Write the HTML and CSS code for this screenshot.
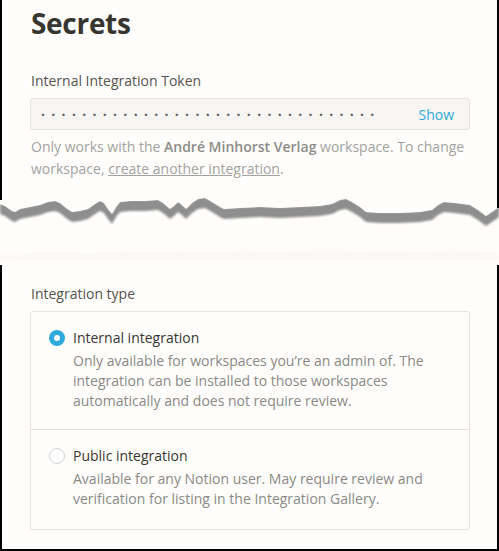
FILE: index.html
```html
<!doctype html>
<html lang="en">
  <head>
    <meta charset="UTF-8" />
    <meta name="viewport" content="width=device-width, initial-scale=1.0" />
    <title>Integration settings</title>
    <link rel="stylesheet" href="styles.css">
  </head>
  <body>
    <div class="sheet sheet-top">
      <h1 class="title">Secrets</h1>

      <div class="field-label">Internal Integration Token</div>
      <div class="token">
        <span class="token-dots">·································</span>
        <span class="token-show">Show</span>
      </div>
      <p class="help">
        Only works with the <strong>André Minhorst Verlag</strong> workspace. To change
        workspace, <a href="#">create another integration</a>.
      </p>
    </div>

    <!-- torn paper between the two cut-outs -->
    <svg class="tear" width="499" height="69" viewBox="0 0 499 69">
      <defs>
        <filter id="soft" x="-5%" y="-50%" width="110%" height="200%">
          <feGaussianBlur stdDeviation="1" />
        </filter>
        <filter id="faint" x="-5%" y="-50%" width="110%" height="200%">
          <feGaussianBlur stdDeviation="2" />
        </filter>
      </defs>
      <path filter="url(#faint)" fill="#f9f8f5" d="M0,60 L30,57 L60,56 L90,58 L120,55 L150,56 L180,55 L210,57 L240,54 L270,56 L300,55 L330,53 L360,56 L390,54 L420,56 L450,54 L499,56 L499,64 L0,64 Z" />
      <path filter="url(#soft)" fill="#8e8e8e" d="M0,7 L5,9 L12,14 L15,15 L20,12 L30,10 L40,8 L48,5 L55,4 L60,6 L66,11 L72,15 L80,14 L88,12 L95,7 L100,4 L104,6 L108,12 L112,17 L116,10 L120,5 L130,4 L145,4 L158,3 L163,6 L170,12 L174,9 L178,5 L182,8 L186,12 L192,6 L198,2 L205,1 L212,5 L220,10 L224,12 L240,11 L260,10 L280,11 L300,10 L320,9 L332,7 L340,3 L346,2 L352,5 L360,10 L366,15 L380,16 L400,16 L420,15 L432,13 L438,8 L444,5 L455,6 L470,8 L478,13 L486,19 L492,15 L499,10 L499,21 L492,26 L486,30 L478,24 L470,19 L455,17 L444,16 L438,19 L432,24 L420,26 L400,27 L380,27 L366,26 L360,21 L352,16 L346,13 L340,14 L332,18 L320,20 L300,21 L280,22 L260,21 L240,22 L224,23 L220,21 L212,16 L205,12 L198,13 L192,17 L186,23 L182,19 L178,16 L174,20 L170,23 L163,17 L158,14 L145,15 L130,15 L120,16 L116,21 L112,28 L108,23 L104,17 L100,15 L95,18 L88,23 L80,25 L72,26 L66,22 L60,17 L55,15 L48,16 L40,19 L30,21 L20,23 L15,26 L12,25 L5,20 L0,18 Z" />
      <path fill="#fffefc" d="M0,0 L499,0 L499,11 L492,16 L486,20 L478,14 L470,9 L455,7 L444,6 L438,9 L432,14 L420,16 L400,17 L380,17 L366,16 L360,11 L352,6 L346,3 L340,4 L332,8 L320,10 L300,11 L280,12 L260,11 L240,12 L224,13 L220,11 L212,6 L205,2 L198,3 L192,7 L186,13 L182,9 L178,6 L174,10 L170,13 L163,7 L158,4 L145,5 L130,5 L120,6 L116,11 L112,18 L108,13 L104,7 L100,5 L95,8 L88,13 L80,15 L72,16 L66,12 L60,7 L55,5 L48,6 L40,9 L30,11 L20,13 L15,16 L12,15 L5,10 L0,8 Z" />
      <rect x="0" y="0" width="2" height="4" fill="#000" />
      <rect x="497" y="0" width="2" height="12" fill="#000" />
    </svg>

    <div class="sheet sheet-bottom">
      <div class="field-label">Integration type</div>
      <div class="options">
        <div class="option">
          <span class="radio radio-on"></span>
          <div class="option-text">
            <div class="option-title">Internal integration</div>
            <div class="option-desc">
              Only available for workspaces you’re an admin of. The<br />
              integration can be installed to those workspaces<br />
              automatically and does not require review.
            </div>
          </div>
        </div>
        <div class="option">
          <span class="radio"></span>
          <div class="option-text">
            <div class="option-title">Public integration</div>
            <div class="option-desc">
              Available for any Notion user. May require review and<br />
              verification for listing in the Integration Gallery.
            </div>
          </div>
        </div>
      </div>
    </div>
  </body>
</html>
```

FILE: styles.css
```css
body {
  margin: 0;
  background: #fffefc;
  font-family: "Open Sans", Arial, sans-serif;
  color: #37352f;
  width: 499px;
}
.sheet {
  background: #fffefc;
  border-left: 2px solid #000;
  border-right: 2px solid #000;
  padding: 0 27px 0 28px;
}
.sheet-top {
  height: 196px;
  padding-top: 5px;
  box-sizing: border-box;
}
.sheet-bottom {
  height: 286px;
  padding-top: 19px;
  border-bottom: 2px solid #000;
  box-sizing: border-box;
}
.tear {
  display: block;
}
.title {
  margin: 0 0 30px 1px;
  font-size: 28px;
  line-height: 36px;
  font-weight: 700;
  letter-spacing: -0.3px;
}
.field-label {
  margin: 0 0 7px 1px;
  font-size: 14px;
  line-height: 20px;
  color: #55534e;
}
.token {
  display: flex;
  align-items: center;
  justify-content: space-between;
  height: 32px;
  box-sizing: border-box;
  padding: 0 15px 0 10px;
  background: #f7f6f3;
  border: 1px solid #e3e2e0;
  border-radius: 3px;
}
.token-dots {
  font-size: 14px;
  letter-spacing: 6.3px;
  color: #5f5e5a;
  font-weight: 700;
}
.token-show {
  font-size: 14px;
  color: #2eaadc;
}
.help {
  margin: 6px 0 0 1px;
  font-size: 14px;
  line-height: 22px;
  color: #a3a29e;
}
.help strong {
  font-weight: 600;
  color: #8c8b87;
}
.help a {
  color: #a3a29e;
  text-decoration: underline;
}
.options {
  border: 1px solid #e3e2e0;
  border-radius: 3px;
}
.option {
  display: flex;
  align-items: flex-start;
  gap: 8px;
  padding: 16px 16px 18px 18px;
}
.option:last-child {
  padding-bottom: 20px;
}
.option + .option {
  border-top: 1px solid #e3e2e0;
}
.radio {
  flex: none;
  width: 16px;
  height: 16px;
  margin-top: 2px;
  box-sizing: border-box;
  border: 1px solid #d3d2cf;
  border-radius: 50%;
  background: #fff;
}
.radio-on {
  border: 5px solid #2eaadc;
  background: #fff;
}
.option-title {
  font-size: 14px;
  line-height: 20px;
  color: #37352f;
}
.option-desc {
  margin-top: 3px;
  font-size: 14px;
  line-height: 20px;
  color: #8a8984;
}
```
